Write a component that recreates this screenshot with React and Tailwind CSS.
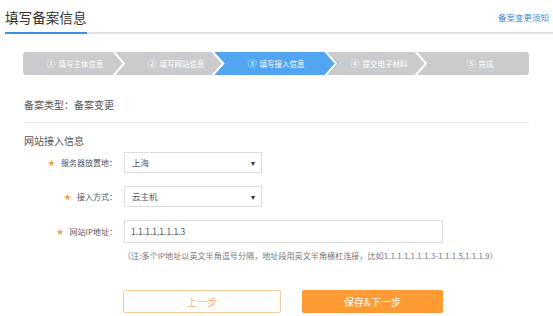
import React from 'react';

const steps = [
  { n: '①', label: '填写主体信息' },
  { n: '②', label: '填写网站信息' },
  { n: '③', label: '填写接入信息' },
  { n: '④', label: '提交电子材料' },
  { n: '⑤', label: '完成' },
];

// label centers along the 506px bar
const centers = [52, 153, 253, 356, 457];

function StepBar() {
  return (
    <div className="relative ml-[23px] mt-[18px] h-[23px] w-[506px] overflow-hidden rounded-[3px] bg-[#c9cbce]">
      <svg className="absolute inset-0" width="506" height="23" viewBox="0 0 506 23">
        <polygon points="191,0 304,0 315,11.5 304,23 191,23 202,11.5" fill="#52a5f0" />
        {[90, 189, 302, 392].map((x) => (
          <polyline key={x} points={`${x},-1 ${x + 11},11.5 ${x},24`} fill="none" stroke="#ffffff" strokeWidth="2" />
        ))}
      </svg>
      <div className="relative h-full">
        {steps.map((s, i) => (
          <div
            key={s.n}
            className="absolute top-0 flex h-full -translate-x-1/2 items-center gap-[3px] whitespace-nowrap text-[7.5px] text-white"
            style={{ left: centers[i] }}
          >
            <span className="text-[9px]">{s.n}</span>
            <span>{s.label}</span>
          </div>
        ))}
      </div>
    </div>
  );
}

function Field({ label, children }) {
  return (
    <div className="flex items-center">
      <div className="flex w-[100px] items-center justify-end pr-[7px] text-[8px] text-[#555]">
        <span className="mr-[6px] text-[7px] text-[#f29b3c]">★</span>
        <span>{label}</span>
      </div>
      {children}
    </div>
  );
}

function Select({ value }) {
  return (
    <div className="flex h-[21px] w-[138px] items-center justify-between border border-[#dcdcdc] bg-white pl-[7px] pr-[6px] text-[8.5px] text-[#555]">
      <span>{value}</span>
      <span className="text-[8px] text-[#333]">▾</span>
    </div>
  );
}

export default function App() {
  return (
    <div className="h-[316px] w-[553px] overflow-hidden bg-white font-['Noto_Sans_CJK_SC','Noto_Sans',sans-serif] text-[#333]">
      {/* Header */}
      <div className="ml-[5px] flex items-start justify-between border-b-2 border-[#e2e2e2]">
        <div className="-mb-[2px] h-[34px] w-[82px] whitespace-nowrap border-b-2 border-[#3b8fe5] pt-[2px] text-[13.6px] leading-[30px] text-[#333]">
          填写备案信息
        </div>
        <a className="mr-[4px] mt-[11px] text-[8.5px] leading-[12px] text-[#3b86d6]">备案变更须知</a>
      </div>

      <StepBar />

      <div className="pl-[24px] pr-[24px]">
        <div className="mt-[23px] text-[10px] leading-[14px] text-[#555]">备案类型：备案变更</div>
        <div className="mt-[10px] border-t border-[#e6e6e6]" />
        <div className="mt-[11px] text-[10px] leading-[14px] text-[#555]">网站接入信息</div>

        <div className="mt-[4px] flex flex-col gap-[13px]">
          <Field label="服务器放置地：">
            <Select value="上海" />
          </Field>
          <Field label="接入方式：">
            <Select value="云主机" />
          </Field>
          <Field label="网站IP地址：">
            <div className="flex h-[23px] w-[319px] items-center border border-[#dcdcdc] bg-white pl-[6px] text-[8.5px] text-[#555]">
              1.1.1.1,1.1.1.3
            </div>
          </Field>
        </div>

        <div className="ml-[99px] mt-[7px] whitespace-nowrap text-[8.1px] leading-[12px] text-[#777]">
          （注:多个IP地址以英文半角逗号分隔，地址段用英文半角横杠连接，比如1.1.1.1,1.1.1.3-1.1.1.5,1.1.1.9）
        </div>

        <div className="ml-[99px] mt-[28px] flex gap-[21px]">
          <button className="h-[23px] w-[158px] rounded-[2px] border border-[#f8c99a] bg-white text-[10px] text-[#f5b57a]">
            上一步
          </button>
          <button className="h-[23px] w-[141px] rounded-[2px] bg-[#fd9a33] text-[10px] text-white">
            保存&amp;下一步
          </button>
        </div>
      </div>
    </div>
  );
}
